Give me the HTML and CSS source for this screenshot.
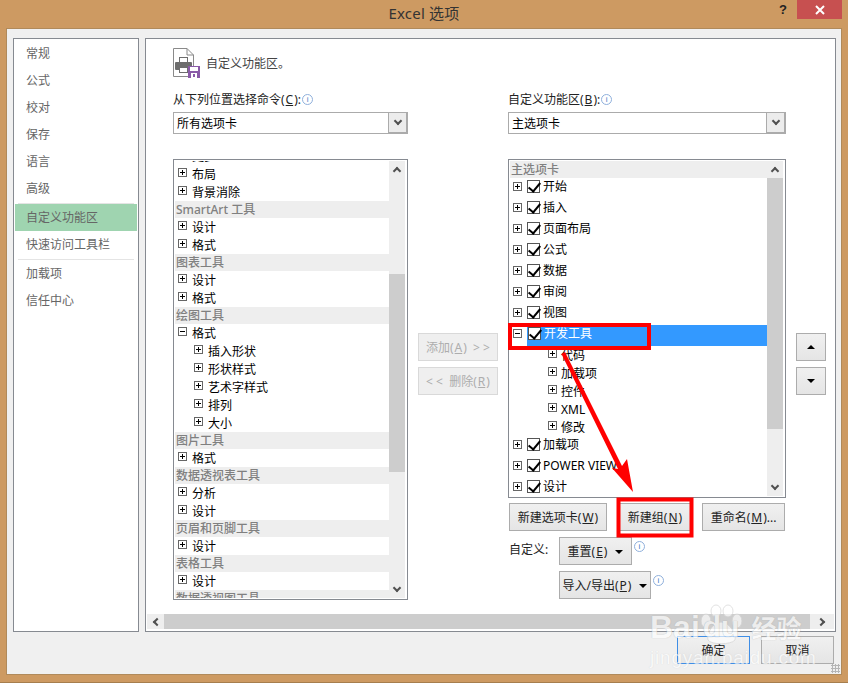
FILE: index.html
```html
<!DOCTYPE html>
<html lang="zh-CN">
<head>
<meta charset="UTF-8" />
<meta name="viewport" content="width=device-width, initial-scale=1" />
<title>Excel 选项</title>
<link rel="stylesheet" href="styles.css">
</head>
<body>
<div class="window">
  <div class="titlebar">
    <div></div>
    <div class="title">Excel 选项</div>
    <div class="controls">
      <span class="help">?</span>
      <span class="close">
        <svg width="10" height="10" viewBox="0 0 10 10"><path d="M1 1 9 9M9 1 1 9" stroke="#fff" stroke-width="2"/></svg>
      </span>
    </div>
  </div>

  <div class="dialog">
    <div class="dialog-body">
      <div class="nav">
        <div class="nav-item">常规</div>
        <div class="nav-item">公式</div>
        <div class="nav-item">校对</div>
        <div class="nav-item">保存</div>
        <div class="nav-item">语言</div>
        <div class="nav-item">高级</div>
        <div class="nav-sep"></div>
        <div class="nav-item selected">自定义功能区</div>
        <div class="nav-item lower">快速访问工具栏</div>
        <div class="nav-sep tight"></div>
        <div class="nav-item lower">加载项</div>
        <div class="nav-item lower">信任中心</div>
      </div>

      <div class="main">
        <div class="content">
          <div class="heading">
            <svg class="heading-icon" width="30" height="31" viewBox="0 0 30 31">
              <path d="M.5.5H14L20.5 7V28.5H.5Z" fill="#fff" stroke="#8a8a8a"/>
              <path d="M14 .5V7H20.5" fill="none" stroke="#8a8a8a"/>
              <rect x="6.5" y="9.5" width="8" height="5" fill="#fff" stroke="#6d6d6d"/>
              <rect x="2" y="14" width="17" height="8" rx="1" fill="#6d6d6d"/>
              <rect x="6.5" y="19.5" width="8" height="5" fill="#fff" stroke="#6d6d6d"/>
              <rect x="15" y="18" width="12" height="12" fill="#8a5aa8"/>
              <rect x="17" y="19" width="8" height="4" fill="#fff"/>
              <rect x="18" y="25" width="6" height="5" fill="#fff"/>
              <rect x="20" y="26" width="2" height="3" fill="#8a5aa8"/>
            </svg>
            <span class="heading-text">自定义功能区。</span>
          </div>

          <div class="columns">
            <div class="col">
              <div class="field-label">从下列位置选择命令(<u>C</u>):<i class="info">i</i></div>
              <div class="combo"><span class="combo-text">所有选项卡</span><span class="combo-btn"><i class="chev down"></i></span></div>
              <div class="list list-left">
                <div class="list-items">
                  <div class="scrolled">
                    <div class="row"><i class="exp"></i>更多</div>
                    <div class="row"><i class="exp"></i>布局</div>
                    <div class="row"><i class="exp"></i>背景消除</div>
                    <div class="group">SmartArt 工具</div>
                    <div class="row"><i class="exp"></i>设计</div>
                    <div class="row"><i class="exp"></i>格式</div>
                    <div class="group">图表工具</div>
                    <div class="row"><i class="exp"></i>设计</div>
                    <div class="row"><i class="exp"></i>格式</div>
                    <div class="group">绘图工具</div>
                    <div class="row"><i class="exp open"></i>格式</div>
                    <div class="row sub"><i class="exp"></i>插入形状</div>
                    <div class="row sub"><i class="exp"></i>形状样式</div>
                    <div class="row sub"><i class="exp"></i>艺术字样式</div>
                    <div class="row sub"><i class="exp"></i>排列</div>
                    <div class="row sub"><i class="exp"></i>大小</div>
                    <div class="group">图片工具</div>
                    <div class="row"><i class="exp"></i>格式</div>
                    <div class="group">数据透视表工具</div>
                    <div class="row"><i class="exp"></i>分析</div>
                    <div class="row"><i class="exp"></i>设计</div>
                    <div class="group">页眉和页脚工具</div>
                    <div class="row"><i class="exp"></i>设计</div>
                    <div class="group">表格工具</div>
                    <div class="row"><i class="exp"></i>设计</div>
                    <div class="group">数据透视图工具</div>
                  </div>
                </div>
                <div class="vscroll">
                  <div class="arrow-cell"><i class="chev up"></i></div>
                  <div class="track"><div class="thumb thumb-left"></div></div>
                  <div class="arrow-cell"><i class="chev down"></i></div>
                </div>
              </div>
            </div>

            <div class="col move-col">
              <button class="btn move-btn" disabled>添加(<u>A</u>) &nbsp;&gt; &gt;</button>
              <button class="btn move-btn" disabled>&lt; &lt;&nbsp; 删除(<u>R</u>)</button>
            </div>

            <div class="col">
              <div class="field-label">自定义功能区(<u>B</u>):<i class="info">i</i></div>
              <div class="combo"><span class="combo-text">主选项卡</span><span class="combo-btn"><i class="chev down"></i></span></div>
              <div class="list list-right">
                <div class="list-items">
                  <div class="group">主选项卡</div>
                  <div class="tab"><i class="exp"></i><i class="chk"></i><span>开始</span></div>
                  <div class="tab"><i class="exp"></i><i class="chk"></i><span>插入</span></div>
                  <div class="tab"><i class="exp"></i><i class="chk"></i><span>页面布局</span></div>
                  <div class="tab"><i class="exp"></i><i class="chk"></i><span>公式</span></div>
                  <div class="tab"><i class="exp"></i><i class="chk"></i><span>数据</span></div>
                  <div class="tab"><i class="exp"></i><i class="chk"></i><span>审阅</span></div>
                  <div class="tab"><i class="exp"></i><i class="chk"></i><span>视图</span></div>
                  <div class="tab"><i class="exp open"></i><div class="tab-sel"><i class="chk"></i><span>开发工具</span></div></div>
                  <div class="row tab-sub"><i class="exp"></i>代码</div>
                  <div class="row tab-sub"><i class="exp"></i>加载项</div>
                  <div class="row tab-sub"><i class="exp"></i>控件</div>
                  <div class="row tab-sub"><i class="exp"></i>XML</div>
                  <div class="row tab-sub"><i class="exp"></i>修改</div>
                  <div class="tab"><i class="exp"></i><i class="chk"></i><span>加载项</span></div>
                  <div class="tab"><i class="exp"></i><i class="chk"></i><span>POWER VIEW</span></div>
                  <div class="tab"><i class="exp"></i><i class="chk"></i><span>设计</span></div>
                </div>
                <div class="vscroll">
                  <div class="arrow-cell"><i class="chev up"></i></div>
                  <div class="track"><div class="thumb thumb-right"></div></div>
                  <div class="arrow-cell"><i class="chev down"></i></div>
                </div>
              </div>

              <div class="list-actions">
                <button class="btn btn-newtab">新建选项卡(<u>W</u>)</button>
                <button class="btn btn-newgroup">新建组(<u>N</u>)</button>
                <button class="btn btn-rename">重命名(<u>M</u>)...</button>
              </div>

              <div class="customize">
                <div class="customize-label">自定义:</div>
                <div class="customize-btns">
                  <div class="customize-row">
                    <button class="btn btn-reset">重置(<u>E</u>)<i class="caret"></i></button><i class="info">i</i>
                  </div>
                  <div class="customize-row">
                    <button class="btn btn-import">导入/导出(<u>P</u>)<i class="caret"></i></button><i class="info">i</i>
                  </div>
                </div>
              </div>
            </div>

            <div class="col order-col">
              <button class="btn order-btn"><i class="tri-up"></i></button>
              <button class="btn order-btn"><i class="tri-down"></i></button>
            </div>
          </div>
        </div>

        <div class="hscroll">
          <div class="harrow"><i class="chev left"></i></div>
          <div class="hthumb"></div>
          <div class="harrow harrow-right"><i class="chev right"></i></div>
        </div>
      </div>
    </div>

    <div class="footer">
      <button class="btn footer-btn default">确定</button>
      <button class="btn footer-btn">取消</button>
    </div>
    <div class="grip"></div>
  </div>
</div>

<!-- red marks drawn on top of the screenshot -->
<svg class="marks" width="848" height="683" viewBox="0 0 848 683">
  <rect x="510" y="325" width="139" height="23" fill="none" stroke="#f00" stroke-width="4"/>
  <rect x="618.5" y="499.5" width="73" height="36" fill="none" stroke="#f00" stroke-width="4"/>
  <path d="M561.5 354 565 352 622 466 627 459 633 492 612 468 618 469Z" fill="#f00"/>
</svg>

<div class="watermark">
  <div class="wm-logo">
    <span class="wm-bai">Bai</span>
    <svg class="wm-paw" width="48" height="42" viewBox="0 0 48 42">
      <g fill="#fff" stroke="#d4d4d4">
        <ellipse cx="9" cy="17" rx="5" ry="7"/>
        <ellipse cx="19" cy="7" rx="5" ry="6"/>
        <ellipse cx="31" cy="7" rx="5" ry="6"/>
        <ellipse cx="40" cy="17" rx="5" ry="7"/>
        <path d="M24 18C16 18 9 30 11 36 14 41 34 41 38 36 40 30 32 18 24 18Z"/>
      </g>
    </svg>
    <span class="wm-du">du</span>
    <span class="wm-cn">经验</span>
  </div>
  <div class="wm-url">jingyan.baidu.com</div>
</div>
</body>
</html>
```

FILE: styles.css
```css
* {
  box-sizing: border-box;
}
html, body {
  margin: 0;
  padding: 0;
}
body {
  position: relative;
  width: 848px;
  height: 683px;
  overflow: hidden;
  background: #cd9a62;
  font-family: "Noto Sans", "Noto Sans CJK SC", sans-serif;
  font-size: 12px;
  color: #000;
}
u {
  margin: 0 1px;
}
.window {
  height: 683px;
  border-bottom: 1px solid #a67e4e;
}
.titlebar {
  display: grid;
  grid-template-columns: 1fr auto 1fr;
  height: 28px;
}
.title {
  font-size: 15px;
  line-height: 26px;
  letter-spacing: 0.2px;
  color: #333;
}
.controls {
  display: flex;
  justify-content: flex-end;
  align-items: flex-start;
  padding-right: 6px;
}
.help {
  margin-right: 10px;
  font-family: "Liberation Sans", sans-serif;
  font-weight: bold;
  font-size: 13px;
  line-height: 20px;
  color: #222;
}
.close {
  display: flex;
  align-items: center;
  justify-content: center;
  width: 45px;
  height: 19px;
  background: #c75050;
}

.dialog {
  position: relative;
  width: 836px;
  height: 647px;
  margin-left: 6px;
  padding: 9px 5px 0 6px;
  background: #f0f0f0;
  border: 1px solid #b08a5b;
}
.dialog-body {
  display: flex;
  gap: 6px;
  height: 594px;
}

.nav {
  width: 126px;
  padding: 0 1px;
  background: #fff;
  border: 1px solid #868a91;
}
.nav-item {
  height: 27px;
  padding-left: 11px;
  line-height: 29px;
  color: #666;
}
.nav-item.selected {
  line-height: 27px;
  background: #9fd4b0;
}
.nav-item.lower {
  line-height: 27px;
}
.nav-sep {
  height: 3px;
  margin: 0 3px;
  border-bottom: 1px solid #e4e4e4;
}
.nav-sep.tight {
  height: 2px;
}

.main {
  display: flex;
  flex-direction: column;
  flex: 1;
  padding: 0 1px 2px;
  background: #fff;
  border: 1px solid #868a91;
}
.content {
  flex: 1;
  padding: 9px 0 0 26px;
}
.heading {
  display: flex;
  align-items: center;
  height: 30px;
}
.heading-icon {
  flex: none;
}
.heading-text {
  margin-left: 3px;
  color: #444;
}
.columns {
  display: grid;
  grid-template-columns: 235px 80px 278px 30px;
  column-gap: 10px;
  margin-top: 14px;
}
.field-label {
  height: 20px;
  line-height: 16px;
  color: #222;
}
.info {
  display: inline-block;
  width: 11px;
  height: 11px;
  margin-left: 1px;
  border: 1px solid #8fb0dc;
  border-radius: 50%;
  font-family: "Liberation Sans", sans-serif;
  font-style: normal;
  font-size: 8px;
  line-height: 9px;
  text-align: center;
  color: #3f7cc4;
  vertical-align: 2px;
}
.combo {
  display: flex;
  height: 22px;
  border: 1px solid #ababab;
}
.combo-text {
  flex: 1;
  padding-left: 3px;
  line-height: 21px;
}
.combo-btn {
  display: flex;
  align-items: center;
  justify-content: center;
  width: 19px;
  background: #ececec;
  border-left: 1px solid #ababab;
  border-right: 1px solid #ababab;
  border-bottom: 1px solid #ababab;
}

.list {
  display: flex;
  margin-top: 25px;
  padding: 1px;
  background: #fff;
  border: 1px solid #868a91;
  overflow: hidden;
}
.list-left {
  height: 441px;
}
.list-right {
  height: 339px;
}
.list-items {
  flex: 1;
  min-width: 0;
  overflow: hidden;
}
.scrolled {
  margin-top: -14px;
}
.group {
  height: 17px;
  padding-left: 1px;
  line-height: 18px;
  font-weight: 500;
  color: #808080;
  background: #eee;
  white-space: nowrap;
}
.row {
  display: flex;
  align-items: center;
  height: 18px;
  padding: 2px 0 0 3px;
  line-height: 16px;
}
.row.sub {
  padding-left: 19px;
}
.row.tab-sub {
  padding-left: 38px;
}
.exp {
  position: relative;
  flex: none;
  width: 9px;
  height: 9px;
  margin-right: 5px;
  margin-top: -5px;
  background: #fff;
  border: 1px solid #666;
}
.row.tab-sub .exp {
  margin-right: 4px;
}
.exp::before {
  content: "";
  position: absolute;
  left: 1px;
  top: 3px;
  width: 5px;
  height: 1px;
  background: #000;
}
.exp::after {
  content: "";
  position: absolute;
  left: 3px;
  top: 1px;
  width: 1px;
  height: 5px;
  background: #000;
}
.exp.open::after {
  display: none;
}
.tab {
  display: flex;
  align-items: flex-start;
  height: 21px;
  padding-left: 3px;
  line-height: 17px;
}
.tab .exp {
  margin: 4px 5px 0 0;
}
.tab span {
  margin-left: 3px;
}
.chk {
  position: relative;
  flex: none;
  width: 13px;
  height: 13px;
  margin-top: 2px;
  background: #fff;
  border: 1px solid #555;
}
.chk::after {
  content: "";
  position: absolute;
  left: 3px;
  top: -1px;
  width: 5px;
  height: 10px;
  border-right: 2.5px solid #000;
  border-bottom: 2.5px solid #000;
  transform: rotate(40deg);
}
.tab-sel {
  display: flex;
  align-items: flex-start;
  flex: 1;
  height: 21px;
  color: #fff;
  background: #3399ff;
}
.tab-sel .chk {
  margin-left: 1px;
}

.vscroll {
  display: flex;
  flex-direction: column;
  flex: none;
  width: 16px;
  margin-right: 1px;
  background: #eee;
}
.arrow-cell {
  display: flex;
  align-items: center;
  justify-content: center;
  flex: none;
  height: 17px;
}
.track {
  flex: 1;
}
.thumb {
  background: #cdcdcd;
}
.thumb-left {
  height: 198px;
  margin-top: 96px;
}
.thumb-right {
  height: 251px;
}
.chev {
  display: block;
  width: 6px;
  height: 6px;
  border-top: 2px solid #505050;
  border-left: 2px solid #505050;
}
.chev.up {
  margin-top: 3px;
  transform: rotate(45deg);
}
.chev.down {
  margin-top: -3px;
  transform: rotate(225deg);
}
.chev.left {
  margin-left: 3px;
  transform: rotate(-45deg);
}
.chev.right {
  margin-right: 3px;
  transform: rotate(135deg);
}

.btn {
  display: inline-block;
  height: 28px;
  padding: 0;
  font-family: inherit;
  font-size: 12px;
  color: #222;
  background: linear-gradient(#f0f0f0, #e5e5e5);
  border: 1px solid #acacac;
}
.btn[disabled] {
  color: #adadad;
  background: #efefef;
  border-color: #d9d9d9;
}
.move-col {
  padding-top: 241px;
}
.move-btn {
  display: block;
  width: 80px;
  margin-bottom: 6px;
}
.order-col {
  padding-top: 241px;
}
.order-btn {
  display: flex;
  align-items: center;
  justify-content: center;
  width: 30px;
  margin-bottom: 6px;
}
.tri-up,
.tri-down,
.caret {
  display: inline-block;
  width: 0;
  height: 0;
  border-left: 4px solid transparent;
  border-right: 4px solid transparent;
}
.tri-up {
  border-bottom: 4px solid #000;
}
.tri-down {
  border-top: 4px solid #000;
}
.caret {
  margin-left: 8px;
  border-top: 4px solid #000;
  vertical-align: 2px;
}
.list-actions {
  display: flex;
  margin: 5px 0 0 1px;
}
.btn-newtab {
  width: 98px;
}
.btn-newgroup {
  width: 74px;
  margin-left: 11px;
}
.btn-rename {
  width: 83px;
  margin-left: 10px;
}
.customize {
  display: flex;
  margin: 6px 0 0 1px;
}
.customize-label {
  width: 50px;
  line-height: 26px;
  color: #222;
}
.customize-btns {
  display: flex;
  flex-direction: column;
  gap: 6px;
}
.customize-row {
  display: flex;
  align-items: flex-start;
}
.customize-row .info {
  margin: 4px 0 0 2px;
}
.btn-reset {
  width: 73px;
}
.btn-import {
  width: 92px;
}

.hscroll {
  display: flex;
  flex: none;
  height: 15px;
  background: #cdcdcd;
}
.harrow {
  display: flex;
  align-items: center;
  justify-content: center;
  width: 17px;
  background: #eee;
}
.harrow-right {
  width: 24px;
}
.hthumb {
  flex: 1;
}

.footer {
  display: flex;
  justify-content: flex-end;
  gap: 11px;
  margin-top: 4px;
  padding-right: 2px;
}
.footer-btn {
  width: 73px;
}
.footer-btn.default {
  border-color: #3f8ee6;
}
.grip {
  position: absolute;
  right: 1px;
  bottom: 1px;
  width: 9px;
  height: 9px;
  background: radial-gradient(circle, #b5b5b5 1px, transparent 1.2px) 0 0 / 3px 3px;
}

.marks {
  position: absolute;
  left: 0;
  top: 0;
  pointer-events: none;
}
.watermark {
  position: absolute;
  left: 650px;
  top: 600px;
  width: 165px;
  opacity: 0.65;
  color: #fff;
  text-shadow: 0 0 1px #9a9a9a;
  pointer-events: none;
}
.wm-logo {
  display: flex;
  align-items: flex-end;
  height: 46px;
}
.wm-bai,
.wm-du {
  font-family: "Liberation Sans", sans-serif;
  font-weight: bold;
  font-size: 32px;
  line-height: 38px;
}
.wm-paw {
  flex: none;
  margin: 0 -42px 0 -3px;
}
.wm-du {
  position: relative;
  font-size: 30px;
  text-shadow: 0 0 1px #8a8a8a;
}
.wm-cn {
  margin-left: 12px;
  font-weight: bold;
  font-size: 25px;
  line-height: 36px;
}
.wm-url {
  margin-top: 2px;
  font-family: "Liberation Sans", sans-serif;
  font-size: 19px;
  line-height: 20px;
  letter-spacing: 0.8px;
  white-space: nowrap;
  text-shadow: 0 0 1px #c4c4c4;
}
```
